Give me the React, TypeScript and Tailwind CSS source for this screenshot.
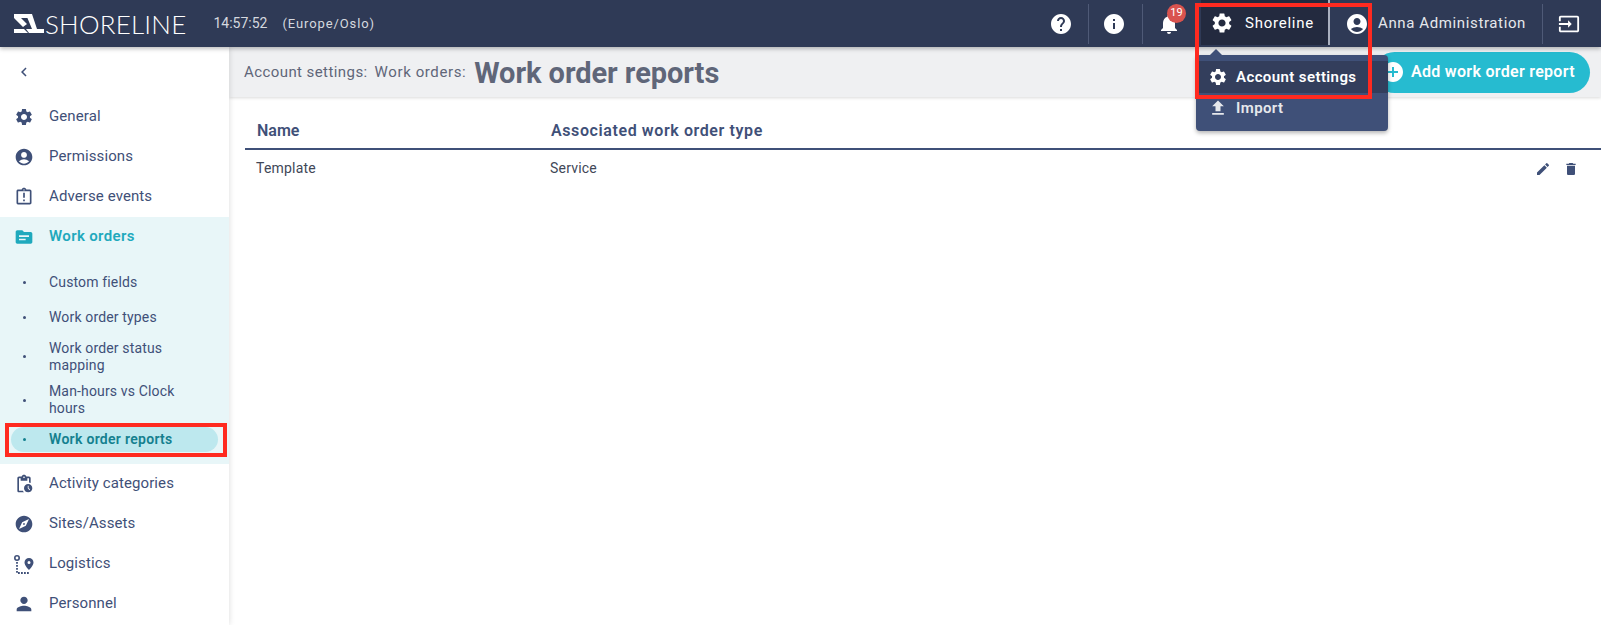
import React from "react";
import {
  MdSettings, MdAccountCircle, MdTopic, MdPendingActions, MdExplore, MdPerson, MdHelp, MdInfo,
  MdNotifications, MdInput, MdFileUpload, MdEdit, MdDelete, MdChevronLeft, MdAddCircle, MdOutlineAssignmentLate,
} from "react-icons/md";

const font = { fontFamily: "Roboto, sans-serif" };

function Logo() {
  return (
    <svg width="30" height="19" viewBox="0 0 30 19" fill="#fff">
      <path d="M0 0h15l2 4H7l6 6-4 3L0 4z" />
      <path d="M0 15h10l4 4H0z" />
      <path d="M14 0h4l5 15h7v4H15l-3-4h6L13 3z" />
    </svg>
  );
}

function LogisticsIcon() {
  return (
    <svg width="24" height="24" viewBox="0 0 24 24" fill="#3f5078">
      <circle cx="5" cy="6" r="2.200" fill="none" stroke="#3f5078" strokeWidth="1.600" />
      <path d="M5 10v11h13" fill="none" stroke="#3f5078" strokeWidth="1.800" strokeDasharray="1.800 1.200" />
      <path d="M17 6a4.500 4.500 0 0 1 4.500 4.500c0 3-4.500 7.500-4.500 7.500s-4.500-4.500-4.500-7.500A4.500 4.500 0 0 1 17 6zm0 3a1.500 1.500 0 1 0 0 3 1.500 1.500 0 0 0 0-3z" fillRule="evenodd" />
    </svg>
  );
}

function NavRow({ icon, label }: { icon: React.ReactNode; label: string }) {
  return (
    <div className="flex h-10 items-center text-[15px] tracking-[0.1px] text-[#3f5078]">
      <div className="flex w-[49px] justify-center pr-[1px]">{icon}</div>
      <span className="pb-[1px]">{label}</span>
    </div>
  );
}

function SubRow({ label, className }: { label: string; className: string }) {
  return (
    <div className={`flex items-center text-[14px] leading-[17px] tracking-[0.15px] text-[#3f5078] ${className}`}>
      <div className="flex w-[49px] shrink-0 justify-center pr-[1px]">
        <span className="h-[3px] w-[3px] rounded-full bg-[#3f5078]" />
      </div>
      <span className="pr-6">{label}</span>
    </div>
  );
}

export default function App() {
  return (
    <div className="relative flex h-[625px] w-[1601px] flex-col overflow-hidden bg-white" style={font}>
      <header className="z-20 flex h-[47px] shrink-0 items-center bg-[#2f3a56] text-white shadow-[0_2px_4px_rgba(0,0,0,0.25)]">
        <div className="flex items-center pl-[14px]">
          <Logo />
          <span className="ml-[1px] text-[26px] leading-none font-light tracking-[0.2px]" style={{ fontFamily: "Lato, sans-serif" }}>SHORELINE</span>
        </div>
        <span className="ml-[27px] text-[14px] text-[#d5d8df]">14:57:52</span>
        <span className="ml-[15px] text-[13px] tracking-[0.9px] text-[#d5d8df]">(Europe/Oslo)</span>
        <div className="ml-auto flex h-full items-center">
          <div className="flex w-[54px] justify-center"><MdHelp size={24} /></div>
          <div className="h-[40px] w-px bg-[#4f5a77]" />
          <div className="flex w-[53px] justify-center pr-[4px]"><MdInfo size={24} /></div>
          <div className="h-[40px] w-px bg-[#4f5a77]" />
          <div className="relative flex w-[58px] justify-center pr-[6px]">
            <MdNotifications size={24} />
            <span className="absolute left-[24px] top-[-8px] flex h-[19px] w-[19px] items-center justify-center rounded-full bg-[#d9534f] text-[11px]">19</span>
          </div>
          <div className="flex h-[45px] w-[129px] items-center self-start border-r-2 border-[#aab0bf] bg-[#232a3f] pt-[1px]">
            <MdSettings size={24} className="ml-[9px]" />
            <span className="ml-[11px] pt-[1px] text-[15px] tracking-[0.75px]">Shoreline</span>
          </div>
          <div className="ml-[15px] flex items-center">
            <MdAccountCircle size={24} />
            <span className="ml-[9px] text-[15px] tracking-[0.62px] text-[#e6e8ec]">Anna Administration</span>
          </div>
          <div className="ml-[16px] h-[40px] w-px bg-[#4f5a77]" />
          <div className="mr-[7px] flex w-[51px] justify-center"><MdInput size={22} /></div>
        </div>
      </header>

      <div className="flex min-h-0 flex-1">
        <aside className="z-10 w-[229px] shrink-0 bg-white shadow-[0_0_6px_rgba(0,0,0,0.15)]">
          <div className="flex h-[50px] items-center pl-[15px]"><MdChevronLeft size={18} className="text-[#3f5078]" /></div>
          <NavRow label="General" icon={<MdSettings size={20} color="#3f5078" />} />
          <NavRow label="Permissions" icon={<MdAccountCircle size={20} color="#3f5078" />} />
          <NavRow label="Adverse events" icon={<MdOutlineAssignmentLate size={20} color="#3f5078" />} />
          <div className="h-[247px] bg-[#e8f6f8]">
            <div className="flex h-10 items-center text-[15px] font-semibold tracking-[0.35px] text-[#1fa9bd]">
              <div className="flex w-[49px] justify-center pr-[1px]"><MdTopic size={20} /></div>
              <span className="pb-[1px]">Work orders</span>
            </div>
            <div className="h-2" />
            <SubRow label="Custom fields" className="h-[35px]" />
            <SubRow label="Work order types" className="h-[35px]" />
            <SubRow label="Work order status mapping" className="h-[43px]" />
            <SubRow label="Man-hours vs Clock hours" className="h-[44px]" />
            <div className="ml-[11px] mt-[5px] flex h-[25px] w-[207px] items-center rounded-full bg-[#bde8ee] text-[14px] font-semibold tracking-[0.3px] text-[#14808f]">
              <div className="flex w-[38px] shrink-0 justify-center pr-[12px]"><span className="h-[3px] w-[3px] rounded-full bg-[#14808f]" /></div>
              <span>Work order reports</span>
            </div>
          </div>
          <NavRow label="Activity categories" icon={<MdPendingActions size={20} color="#3f5078" />} />
          <NavRow label="Sites/Assets" icon={<MdExplore size={20} color="#3f5078" />} />
          <NavRow label="Logistics" icon={<LogisticsIcon />} />
          <NavRow label="Personnel" icon={<MdPerson size={22} color="#3f5078" />} />
        </aside>

        <main className="min-w-0 flex-1">
          <div className="flex h-[50px] items-center bg-[#eff0f2] pl-[15px] pr-[11px] shadow-[0_1px_3px_rgba(0,0,0,0.15)]">
            <span className="text-[15px] tracking-[0.42px] text-[#5f6679]">Account settings:</span>
            <span className="ml-[7px] text-[15px] tracking-[0.6px] text-[#5f6679]">Work orders:</span>
            <h1 className="ml-[8px] pt-[3px] text-[29px] font-bold tracking-[-0.05px] text-[#5f6679]">Work order reports</h1>
            <button className="ml-auto flex h-[41px] w-[216px] items-center rounded-full bg-[#26bbd0] text-[16px] font-semibold tracking-[0.3px] text-white">
              <MdAddCircle size={24} className="ml-[7px]" />
              <span className="ml-[6px]">Add work order report</span>
            </button>
          </div>
          <div className="pl-[16px]">
            <div className="flex h-[53px] items-center border-b-2 border-[#3f5078] pt-[16px] text-[16px] font-semibold text-[#3f5078]">
              <span className="ml-[12px] w-[294px]">Name</span>
              <span className="tracking-[0.6px]">Associated work order type</span>
            </div>
            <div className="flex h-[37px] items-center text-[14px] tracking-[0.2px] text-[#414757]">
              <span className="ml-[11px] w-[294px]">Template</span>
              <span>Service</span>
              <div className="ml-auto flex w-[66px] gap-[12px] text-[#3f5078]">
                <MdEdit size={16} />
                <MdDelete size={16} />
              </div>
            </div>
          </div>
        </main>
      </div>

      <div className="absolute left-[1196px] top-[55px] z-30 h-[76px] w-[192px] rounded-[4px] bg-[#3f5078] text-[15px] font-semibold tracking-[0.4px] text-white shadow-[0_2px_4px_rgba(0,0,0,0.3)]">
        <div className="absolute left-[14px] top-[-6px] h-0 w-0 border-x-[6px] border-b-[6px] border-x-transparent border-b-[#3f5078]" />
        <div className="mt-[6px] flex h-[32px] items-center bg-[#333e5c]">
          <MdSettings size={20} className="ml-[12px]" />
          <span className="ml-[8px]">Account settings</span>
        </div>
        <div className="flex h-[30px] items-center text-[#e6e8ec]">
          <MdFileUpload size={20} className="ml-[12px]" />
          <span className="ml-[8px]">Import</span>
        </div>
      </div>
      <div className="pointer-events-none absolute left-[1195px] top-[3px] z-40 h-[96px] w-[177px] border-4 border-[#ff2a20]" />
      <div className="pointer-events-none absolute left-[5px] top-[423px] z-40 h-[34px] w-[222px] border-4 border-[#ff2a20]" />
    </div>
  );
}
